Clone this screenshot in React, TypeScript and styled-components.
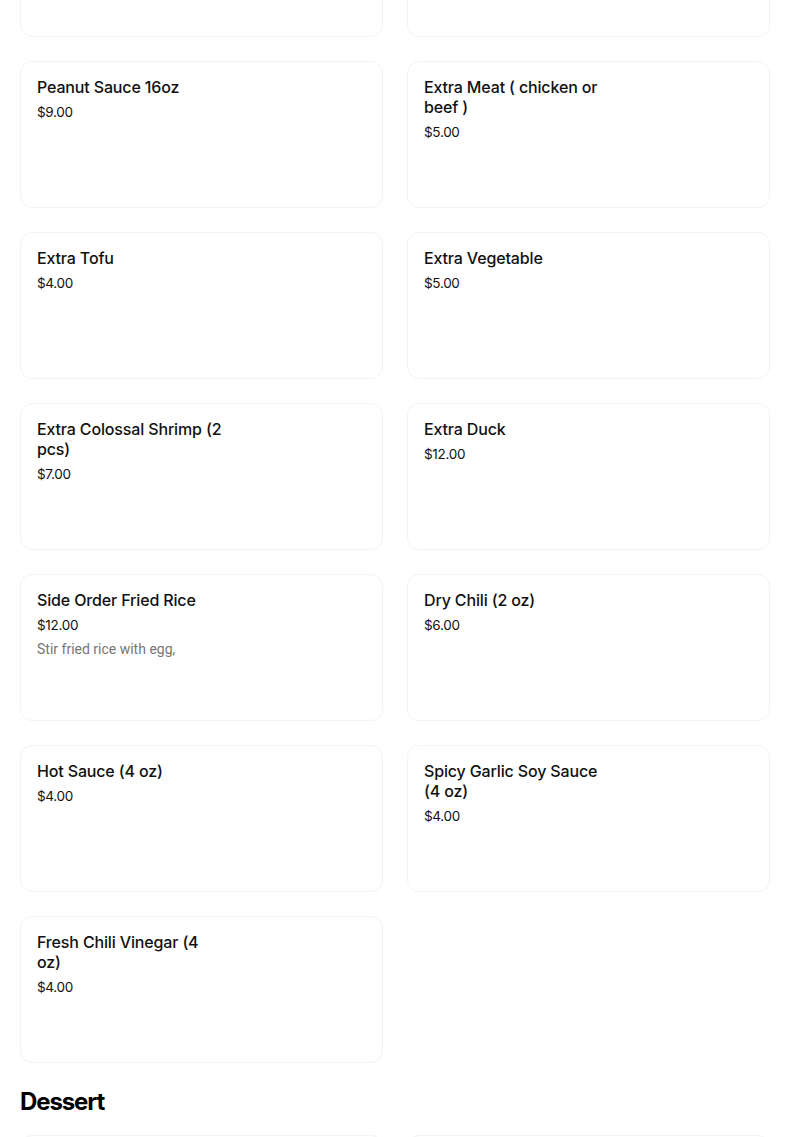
import styled, { createGlobalStyle } from 'styled-components';

const GlobalStyle = createGlobalStyle`
  html, body {
    margin: 0;
    padding: 0;
    background: #ffffff;
    overflow: hidden;
  }
`;

type Item = { name: string; price: string; desc?: string };

const extras: Item[] = [
  { name: '', price: '' },
  { name: '', price: '' },
  { name: 'Peanut Sauce 16oz', price: '$9.00' },
  { name: 'Extra Meat ( chicken or beef )', price: '$5.00' },
  { name: 'Extra Tofu', price: '$4.00' },
  { name: 'Extra Vegetable', price: '$5.00' },
  { name: 'Extra Colossal Shrimp (2 pcs)', price: '$7.00' },
  { name: 'Extra Duck', price: '$12.00' },
  { name: 'Side Order Fried Rice', price: '$12.00', desc: 'Stir fried rice with egg,' },
  { name: 'Dry Chili (2 oz)', price: '$6.00' },
  { name: 'Hot Sauce (4 oz)', price: '$4.00' },
  { name: 'Spicy Garlic Soy Sauce (4 oz)', price: '$4.00' },
  { name: 'Fresh Chili Vinegar (4 oz)', price: '$4.00' },
];

const dessert: Item[] = [
  { name: '', price: '' },
  { name: '', price: '' },
];

const Page = styled.div`
  width: 750px;
  margin: -110px 0 0 20px;
  font-family: Inter, "Liberation Sans", sans-serif;
  color: #000;
`;

const Grid = styled.div`
  display: grid;
  grid-template-columns: 363px 363px;
  gap: 24px;
`;

const Card = styled.div`
  box-sizing: border-box;
  height: 147px;
  padding: 15px 16px 16px;
  border: 1px solid #f3f3f3;
  border-radius: 12px;
  background: #fff;
`;

const Info = styled.div`
  max-width: 186px;
`;

const Name = styled.div`
  font-size: 16px;
  font-weight: 500;
  line-height: 20px;
  letter-spacing: -0.15px;
  color: #111;
`;

const Price = styled.div`
  margin-top: 5px;
  font-size: 13.5px;
  font-weight: 400;
  line-height: 20px;
  letter-spacing: -0.3px;
  color: #111;
`;

const Desc = styled.div`
  margin-top: 4px;
  font-family: Roboto, "Liberation Sans", sans-serif;
  font-size: 14px;
  line-height: 20px;
  color: #767676;
`;

const Heading = styled.h2`
  margin: 23px 0 17px;
  font-size: 24px;
  font-weight: 700;
  line-height: 32px;
  letter-spacing: -1.1px;
`;

const MenuCard = ({ item }: { item: Item }) => (
  <Card>
    <Info>
      {item.name && <Name>{item.name}</Name>}
      {item.price && <Price>{item.price}</Price>}
      {item.desc && <Desc>{item.desc}</Desc>}
    </Info>
  </Card>
);

const App = () => {
  return (
    <>
      <GlobalStyle />
      <Page>
        <Grid>
          {extras.map((item, i) => (
            <MenuCard key={i} item={item} />
          ))}
        </Grid>
        <Heading>Dessert</Heading>
        <Grid>
          {dessert.map((item, i) => (
            <MenuCard key={i} item={item} />
          ))}
        </Grid>
      </Page>
    </>
  );
};

export default App;
